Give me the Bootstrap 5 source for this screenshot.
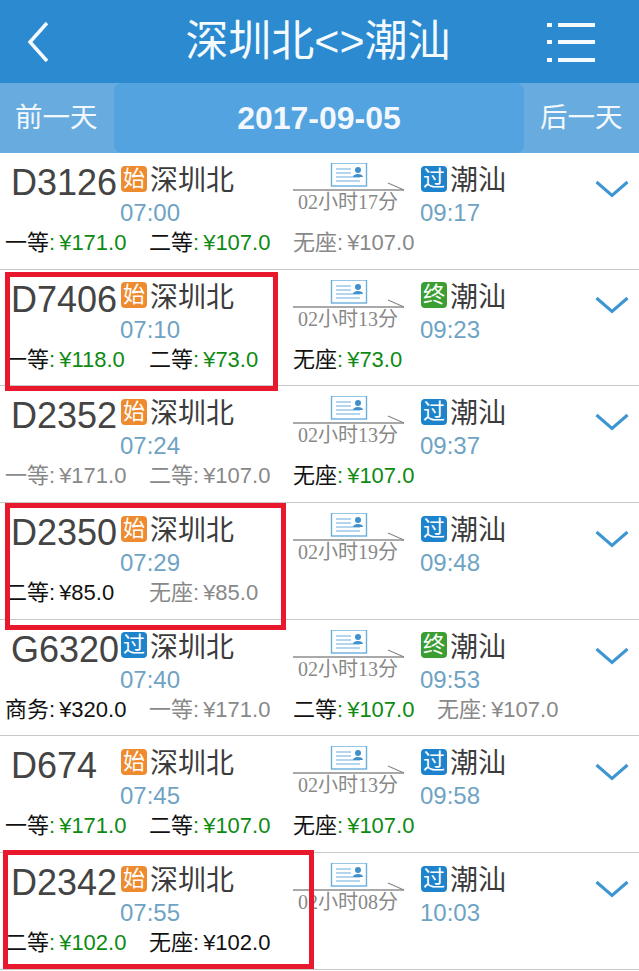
<!DOCTYPE html>
<html lang="zh-CN">
<head>
    <meta charset="UTF-8">
    <meta name="viewport" content="width=device-width, initial-scale=1.0">
    <title>深圳北&lt;&gt;潮汕</title>
    <link href="https://cdn.jsdelivr.net/npm/bootstrap@5.3.0/dist/css/bootstrap.min.css" rel="stylesheet">
    <style>
        body {
            background-color: #fff;
            font-family: "Liberation Sans", "Noto Sans CJK SC", sans-serif;
            overflow: hidden;
        }
        .page-wrap { width: 639px; height: 971px; overflow: hidden; }
        .top-bar { height: 83px; background-color: #2b8ad0; padding: 0 44px 0 27px; }
        .top-title { font-size: 43px; line-height: 1; padding-left: 40px; color: #f4fafe; }
        .date-bar { height: 70px; background-color: #68acdf; color: #f2f8fd; font-size: 27.5px; }
        .date-side { width: 114px; padding-left: 15px; }
        .date-side-next { width: 115px; padding-left: 16px; }
        .date-now { background-color: #52a3e0; border-radius: 8px; font-size: 32px; font-weight: 700; }
        .train-row { height: 116.7px; border-bottom: 1px solid #c8c8c8; padding: 10px 0 0 5px; }
        .row-top { height: 64px; }
        .train-no { width: 115px; padding-left: 6px; font-size: 36px; line-height: 40px; color: #444; }
        .station-col { width: 172px; }
        .arrive-col { width: 177px; padding-left: 2px; }
        .station-line { height: 36px; color: #3c3c3c; font-size: 28px; line-height: 36px; }
        .stop-tag { width: 26px; height: 26px; border-radius: 4px; color: #fff; font-size: 22px; line-height: 25px; text-align: center; margin: 0 3px 5px 1px; }
        .tag-start { background-color: #ee8b2f; }
        .tag-pass { background-color: #1c83cc; }
        .tag-end { background-color: #3a9e32; }
        .time-text { font-size: 24px; line-height: 28px; color: #6ea3c4; }
        .duration-col { width: 126px; padding-left: 1px; }
        .duration-text { font-family: "Liberation Serif", "Noto Sans CJK SC", serif; font-size: 20px; line-height: 20px; color: #888; margin: -1px 0 0 5px; }
        .chevron-col { margin-top: 13px; }
        .price-line { font-size: 22px; line-height: 28px; margin-top: 2px; }
        .price-cell { width: 144px; white-space: nowrap; color: #111; }
        .price-val { margin-left: 4px; }
        .price-green { color: #0d8a12; }
        .price-off { color: #888; }
        .red-box { position: absolute; border: 5px solid #e8192c; }
        .box-a { left: 5px; top: 272px; width: 273px; height: 119px; }
        .box-b { left: 5px; top: 503px; width: 281px; height: 127px; }
        .box-c { left: 3px; top: 850px; width: 311px; height: 119px; }
    </style>
</head>
<body>
    <div class="page-wrap position-relative">
        <div class="top-bar d-flex align-items-center justify-content-between">
            <svg width="22" height="42" viewBox="0 0 22 42"><path d="M20 2 L3 21 L20 40" fill="none" stroke="#f4fafe" stroke-width="3.5"/></svg>
            <div class="top-title">深圳北&lt;&gt;潮汕</div>
            <svg width="48" height="44" viewBox="0 0 48 44">
                <g fill="#f4fafe">
                    <rect x="0" y="3" width="5" height="4"/><rect x="0" y="20" width="5" height="4"/><rect x="0" y="38" width="5" height="4"/>
                    <rect x="11" y="3" width="37" height="4"/><rect x="11" y="20" width="37" height="4"/><rect x="11" y="38" width="37" height="4"/>
                </g>
            </svg>
        </div>
        <div class="date-bar d-flex align-items-center">
            <div class="date-side">前一天</div>
            <div class="date-now flex-grow-1 h-100 d-flex align-items-center justify-content-center">2017-09-05</div>
            <div class="date-side-next">后一天</div>
        </div>
        <div id="train-list"></div>
        <div class="red-box box-a"></div>
        <div class="red-box box-b"></div>
        <div class="red-box box-c"></div>
    </div>

    <script>
        // on = has tickets, off = sold out (grey)
        const trains = [
            { no: 'D3126', from: ['始', 'start'], dep: '07:00', dur: '02小时17分', to: ['过', 'pass'], arr: '09:17',
              prices: [['一等', '¥171.0', 'on'], ['二等', '¥107.0', 'on'], ['无座', '¥107.0', 'off']] },
            { no: 'D7406', from: ['始', 'start'], dep: '07:10', dur: '02小时13分', to: ['终', 'end'], arr: '09:23',
              prices: [['一等', '¥118.0', 'on'], ['二等', '¥73.0', 'on'], ['无座', '¥73.0', 'on']] },
            { no: 'D2352', from: ['始', 'start'], dep: '07:24', dur: '02小时13分', to: ['过', 'pass'], arr: '09:37',
              prices: [['一等', '¥171.0', 'off'], ['二等', '¥107.0', 'off'], ['无座', '¥107.0', 'on']] },
            { no: 'D2350', from: ['始', 'start'], dep: '07:29', dur: '02小时19分', to: ['过', 'pass'], arr: '09:48',
              prices: [['二等', '¥85.0', 'few'], ['无座', '¥85.0', 'off']] },
            { no: 'G6320', from: ['过', 'pass'], dep: '07:40', dur: '02小时13分', to: ['终', 'end'], arr: '09:53',
              prices: [['商务', '¥320.0', 'few'], ['一等', '¥171.0', 'off'], ['二等', '¥107.0', 'on'], ['无座', '¥107.0', 'off']] },
            { no: 'D674', from: ['始', 'start'], dep: '07:45', dur: '02小时13分', to: ['过', 'pass'], arr: '09:58',
              prices: [['一等', '¥171.0', 'on'], ['二等', '¥107.0', 'on'], ['无座', '¥107.0', 'on']] },
            { no: 'D2342', from: ['始', 'start'], dep: '07:55', dur: '02小时08分', to: ['过', 'pass'], arr: '10:03',
              prices: [['二等', '¥102.0', 'on'], ['无座', '¥102.0', 'few']] }
        ];

        const ticketIcon = `
            <svg class="d-block" width="112" height="30" viewBox="0 0 112 30">
                <rect x="38.5" y="0" width="35" height="23" fill="#fff" stroke="#69aedd" stroke-width="1.4"/>
                <path d="M43 6h15M43 10h15M43 14h24M43 18h24" stroke="#69aedd" stroke-width="1.2"/>
                <circle cx="65" cy="7" r="3" fill="#3f90cc"/>
                <path d="M60 14c0-4 10-4 10 0z" fill="#3f90cc"/>
                <path d="M0 27H111" stroke="#555" stroke-width="1.2"/>
                <path d="M95 20L111 27" stroke="#888" stroke-width="1.2"/>
            </svg>`;

        const chevron = `
            <svg width="34" height="18" viewBox="0 0 34 18"><path d="M1.5 2L17 15.5L32.5 2" fill="none" stroke="#3d95d2" stroke-width="3"/></svg>`;

        function priceCell(p) {
            if (p[2] === 'off') return `<div class="price-cell price-off">${p[0]}:<span class="price-val">${p[1]}</span></div>`;
            if (p[2] === 'few') return `<div class="price-cell">${p[0]}:<span class="price-val">${p[1]}</span></div>`;
            return `<div class="price-cell">${p[0]}<span class="price-green">:<span class="price-val">${p[1]}</span></span></div>`;
        }

        document.getElementById('train-list').innerHTML = trains.map(t => `
            <div class="train-row">
                <div class="row-top d-flex">
                    <div class="train-no">${t.no}</div>
                    <div class="station-col">
                        <div class="station-line d-flex align-items-center"><span class="stop-tag tag-${t.from[1]}">${t.from[0]}</span>深圳北</div>
                        <div class="time-text">${t.dep}</div>
                    </div>
                    <div class="duration-col">
                        ${ticketIcon}
                        <div class="duration-text">${t.dur}</div>
                    </div>
                    <div class="arrive-col">
                        <div class="station-line d-flex align-items-center"><span class="stop-tag tag-${t.to[1]}">${t.to[0]}</span>潮汕</div>
                        <div class="time-text">${t.arr}</div>
                    </div>
                    <div class="chevron-col">${chevron}</div>
                </div>
                <div class="price-line d-flex">${t.prices.map(priceCell).join('')}</div>
            </div>`).join('');
    </script>

    <script src="https://cdn.jsdelivr.net/npm/bootstrap@5.3.0/dist/js/bootstrap.bundle.min.js"></script>
</body>
</html>
